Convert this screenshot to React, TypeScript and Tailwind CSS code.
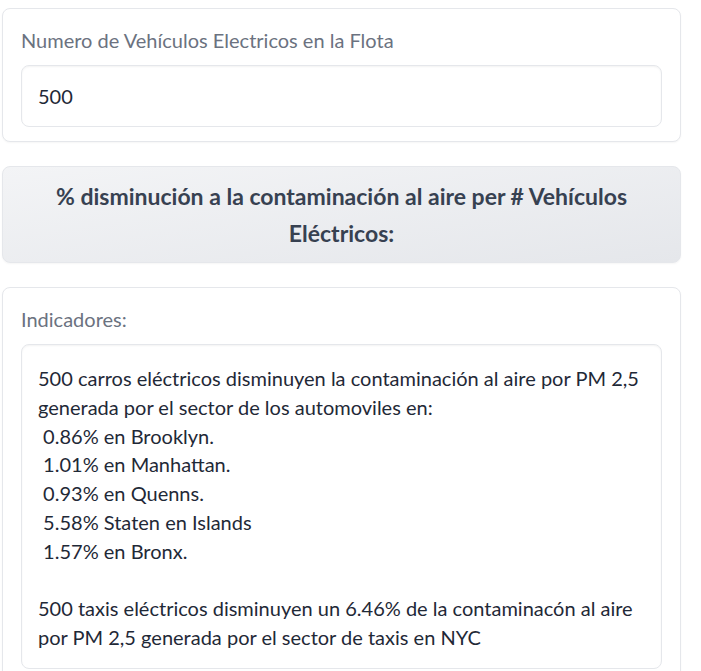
import React from 'react';

const indicadores = `500 carros eléctricos disminuyen la contaminación al aire por PM 2,5
generada por el sector de los automoviles en:
 0.86% en Brooklyn.
 1.01% en Manhattan.
 0.93% en Quenns.
 5.58% Staten en Islands
 1.57% en Bronx.

500 taxis eléctricos disminuyen un 6.46% de la contaminacón al aire
por PM 2,5 generada por el sector de taxis en NYC`;

const Block: React.FC<{ label: string; children: React.ReactNode }> = ({ label, children }) => (
    <div className="flex flex-col rounded-lg border border-[#e5e7eb] bg-white px-[18px] pt-[17px] pb-[14px] shadow-[0_1px_2px_rgba(0,0,0,0.04)]">
        <span className="text-[20px] leading-[28px] text-[#6b7280]">{label}</span>
        <div className="mt-[11px]">{children}</div>
    </div>
);

export default function App() {
    return (
        <div className="min-h-screen bg-white font-['Lato','Noto_Sans',sans-serif]">
            <div className="flex w-[679px] flex-col gap-[24px] pt-[8px] ml-[2px]">
                <Block label="Numero de Vehículos Electricos en la Flota">
                    <div className="flex h-[62px] items-center rounded-lg border border-[#e5e7eb] bg-white px-[16px] text-[20px] text-[#1f2937] shadow-[inset_0_1px_2px_rgba(0,0,0,0.05)]">
                        500
                    </div>
                </Block>

                <div className="rounded-lg border border-[#e5e7eb] bg-gradient-to-br from-[#f3f4f6] to-[#e5e7eb] pt-[11px] pb-[10px] text-center text-[23px] font-bold leading-[37px] text-[#374151] shadow-[0_1px_2px_rgba(0,0,0,0.04)]">
                    % disminución a la contaminación al aire per # Vehículos
                    <br />
                    Eléctricos:
                </div>

                <Block label="Indicadores:">
                    <div className="whitespace-pre rounded-lg border border-[#e5e7eb] bg-white px-[16px] pt-[19px] pb-[16px] text-[20px] leading-[28.8px] text-[#1f2937] shadow-[inset_0_1px_2px_rgba(0,0,0,0.05)]">
                        {indicadores}
                    </div>
                </Block>
            </div>
        </div>
    );
}
